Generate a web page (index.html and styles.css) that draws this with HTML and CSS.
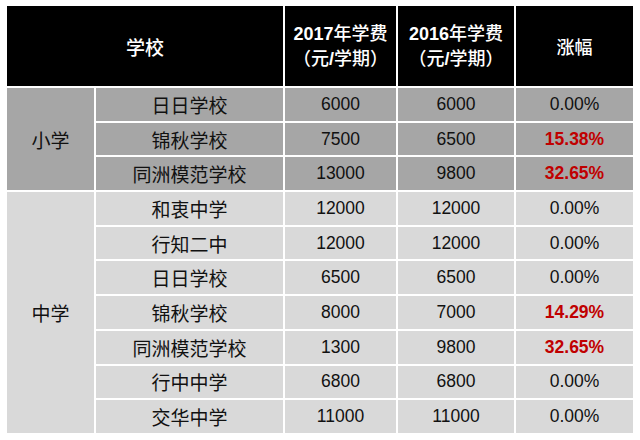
FILE: index.html
```html
<!DOCTYPE html>
<html lang="zh">
<head>
<meta charset="utf-8">
<link rel="stylesheet" href="styles.css">
</head>
<body>
<div class="fee-table">
  <div class="cell head span2">学校</div>
  <div class="cell head"><span class="hline"><b class="num">2017</b>年学费</span><span class="hline">（元<b class="num">/</b>学期）</span></div>
  <div class="cell head"><span class="hline"><b class="num">2016</b>年学费</span><span class="hline">（元<b class="num">/</b>学期）</span></div>
  <div class="cell head">涨幅</div>

  <div class="cell dark grp3">小学</div>
  <div class="cell dark">日日学校</div><div class="cell dark num">6000</div><div class="cell dark num">6000</div><div class="cell dark num">0.00%</div>
  <div class="cell dark">锦秋学校</div><div class="cell dark num">7500</div><div class="cell dark num">6500</div><div class="cell dark num up">15.38%</div>
  <div class="cell dark">同洲模范学校</div><div class="cell dark num">13000</div><div class="cell dark num">9800</div><div class="cell dark num up">32.65%</div>

  <div class="cell light grp7">中学</div>
  <div class="cell light">和衷中学</div><div class="cell light num">12000</div><div class="cell light num">12000</div><div class="cell light num">0.00%</div>
  <div class="cell light">行知二中</div><div class="cell light num">12000</div><div class="cell light num">12000</div><div class="cell light num">0.00%</div>
  <div class="cell light">日日学校</div><div class="cell light num">6500</div><div class="cell light num">6500</div><div class="cell light num">0.00%</div>
  <div class="cell light">锦秋学校</div><div class="cell light num">8000</div><div class="cell light num">7000</div><div class="cell light num up">14.29%</div>
  <div class="cell light">同洲模范学校</div><div class="cell light num">1300</div><div class="cell light num">9800</div><div class="cell light num up">32.65%</div>
  <div class="cell light">行中中学</div><div class="cell light num">6800</div><div class="cell light num">6800</div><div class="cell light num">0.00%</div>
  <div class="cell light">交华中学</div><div class="cell light num">11000</div><div class="cell light num">11000</div><div class="cell light num">0.00%</div>
</div>
</body>
</html>
```

FILE: styles.css
```css
html, body {
  margin: 0;
  padding: 0;
  background: #ffffff;
}
body {
  font-family: "Noto Sans CJK SC", "Liberation Sans", sans-serif;
}
.fee-table {
  margin: 6px 0 0 7px;
  width: 626px;
  display: grid;
  grid-template-columns: 87px 187px 111px 116px 117px;
  grid-template-rows: 80px repeat(10, 32.7px);
  gap: 2px;
  background: #ffffff;
}
.cell {
  display: flex;
  align-items: center;
  justify-content: center;
  font-size: 19px;
  font-weight: normal;
  color: #111111;
  white-space: nowrap;
}
.head {
  background: #000000;
  color: #ffffff;
  flex-direction: column;
  font-size: 18px;
  font-weight: 500;
}
.hline {
  display: block;
  line-height: 23px;
}
.span2 { grid-column: span 2; font-size: 19px; }
.grp3 { grid-row: span 3; }
.grp7 { grid-row: span 7; }
.dark { background: #a6a6a6; }
.light { background: #d9d9d9; }
.num {
  font-family: "Liberation Sans", Arial, sans-serif;
  font-size: 17.5px;
  font-weight: normal;
}
.head .num {
  font-weight: bold;
  font-size: 18px;
}
.up {
  color: #c00000;
  font-weight: bold;
}
```
